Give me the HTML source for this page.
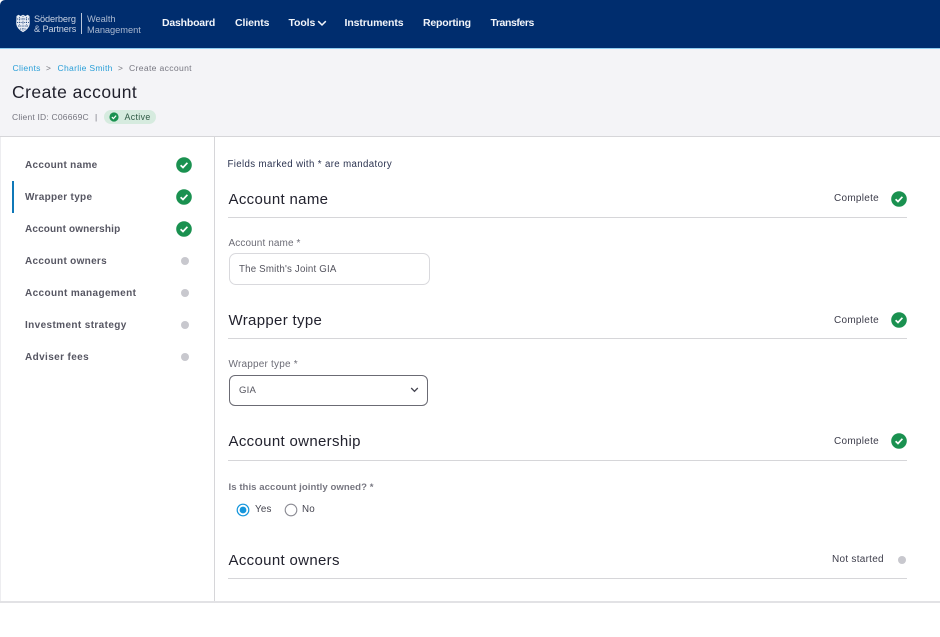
<!DOCTYPE html>
<html><head><meta charset="utf-8"><style>
html,body{margin:0;padding:0;background:#fff}
#p{position:relative;width:940px;height:637px;overflow:hidden;background:#fff;font-family:"Liberation Sans",sans-serif;color:#33333f;filter:blur(.3px)}
#p div{position:absolute;white-space:nowrap}
.t{line-height:14px}
.nav{top:16px;color:#f2f5fa;font-size:10.5px;font-weight:bold}
.side{left:25px;font-size:10px;font-weight:bold;letter-spacing:.38px;color:#565662}
.h{left:228.5px;font-size:15px;letter-spacing:.33px;color:#22222e;line-height:18px}
.hr{left:228px;width:679px;height:1px;background:#d6d6d9}
.lab{left:228.5px;font-size:10px;letter-spacing:.2px;color:#6c6c76}
.st{font-size:10px;letter-spacing:.27px;color:#3c3c4a}
.dot{width:8px;height:8px;border-radius:50%;background:#c8c8ce}
svg{position:absolute;display:block}
</style></head><body><div id="p">
<div style="left:0;top:0;width:940px;height:48px;background:#002d6e;border-radius:5px 0 0 0"></div>
<div style="left:0;top:48px;width:940px;height:1px;background:#8fcdf0"></div>
<div style="left:0;top:49px;width:940px;height:87px;background:#f4f4f7"></div>
<div style="left:0;top:136px;width:940px;height:1px;background:#d6d6d9"></div>
<div style="left:214px;top:137px;width:1px;height:464px;background:#d6d6d9"></div>
<div style="left:0;top:137px;width:1px;height:464px;background:#ededf0"></div>
<div style="left:0;top:601px;width:940px;height:2px;background:#e2e2e5"></div>

<svg style="left:16px;top:14px" width="14" height="19" viewBox="0 0 14 19"><path d="M.5 2 L2.5 .8 L4.5 2 L7 .8 L9.5 2 L11.5 .8 L13.5 2 L13.8 10 Q13 15 7 18.2 Q1 15 .2 10Z" fill="#e6ebf3"/><path d="M1 5H13M1 8.5H13M2 12H12M4 15H10" stroke="#002d6e" stroke-width=".7" stroke-dasharray="1.2 1" fill="none"/><path d="M7 2V17M3.5 3V13M10.5 3V13" stroke="#002d6e" stroke-width=".6" stroke-dasharray="1 1.4" fill="none"/></svg>
<div class="t" style="left:34px;top:14px;font-size:9.2px;color:#c9d3e3;letter-spacing:-.12px;line-height:10px">Söderberg<br>&amp; Partners</div>
<div style="left:81px;top:13px;width:1px;height:21px;background:#b9c6da"></div>
<div class="t" style="left:87px;top:14px;font-size:9.3px;color:#a9b8d0;letter-spacing:-.05px;line-height:10.5px">Wealth<br>Management</div>
<div class="t nav" style="left:162px;letter-spacing:-.2px">Dashboard</div>
<div class="t nav" style="left:235px;letter-spacing:-.08px">Clients</div>
<div class="t nav" style="left:288.5px;letter-spacing:-.1px">Tools</div>
<svg style="left:317px;top:20px" width="10" height="7" viewBox="0 0 10 7"><path d="M1.2 1.2 L5 5 L8.8 1.2" fill="none" stroke="#f2f5fa" stroke-width="1.5"/></svg>
<div class="t nav" style="left:344.5px;letter-spacing:-.1px">Instruments</div>
<div class="t nav" style="left:423px;letter-spacing:-.2px">Reporting</div>
<div class="t nav" style="left:490.5px;letter-spacing:-.43px">Transfers</div>

<div class="t" style="left:12.5px;top:61px;font-size:8.6px;letter-spacing:.28px;color:#2a9fd8">Clients</div>
<div class="t" style="left:46px;top:61px;font-size:8.4px;color:#77777f">&gt;</div>
<div class="t" style="left:57.5px;top:61px;font-size:8.6px;letter-spacing:.28px;color:#2a9fd8">Charlie Smith</div>
<div class="t" style="left:118px;top:61px;font-size:8.4px;color:#77777f">&gt;</div>
<div class="t" style="left:129px;top:61px;font-size:8.6px;letter-spacing:.33px;color:#777781">Create account</div>
<div style="left:12px;top:82px;font-size:17.5px;letter-spacing:.47px;line-height:21px;color:#1f1f2b">Create account</div>
<div class="t" style="left:12px;top:110px;font-size:8.5px;letter-spacing:.2px;color:#75757f">Client ID: C06669C</div>
<div class="t" style="left:95px;top:110px;font-size:8.5px;color:#75757f">|</div>
<div style="left:104px;top:110px;width:52px;height:14px;border-radius:7px;background:#d6ebdf"></div>
<svg style="left:109px;top:112px" width="10" height="10" viewBox="0 0 10 10"><circle cx="5" cy="5" r="4.6" fill="#1a9150"/><path d="M2.9 5.1 L4.4 6.6 L7.1 3.6" fill="none" stroke="#fff" stroke-width="1.2"/></svg>
<div class="t" style="left:124.5px;top:110px;font-size:8.8px;letter-spacing:.35px;color:#2f5a45">Active</div>

<div class="t side" style="top:159px;letter-spacing:.3px">Account name</div>
<div class="t side" style="top:191px;letter-spacing:.3px">Wrapper type</div>
<div class="t side" style="top:223px;letter-spacing:.15px">Account ownership</div>
<div class="t side" style="top:255px;letter-spacing:.3px">Account owners</div>
<div class="t side" style="top:287px">Account management</div>
<div class="t side" style="top:319px">Investment strategy</div>
<div class="t side" style="top:351px">Adviser fees</div>
<div style="left:12px;top:181px;width:2px;height:32px;background:#0f78b8"></div>
<svg style="left:176px;top:157px" width="16" height="16" viewBox="0 0 16 16"><circle cx="8" cy="8" r="7.8" fill="#1a9150"/><path d="M4.6 8.2 L7 10.5 L11.4 5.8" fill="none" stroke="#fff" stroke-width="1.7"/></svg>
<svg style="left:176px;top:189px" width="16" height="16" viewBox="0 0 16 16"><circle cx="8" cy="8" r="7.8" fill="#1a9150"/><path d="M4.6 8.2 L7 10.5 L11.4 5.8" fill="none" stroke="#fff" stroke-width="1.7"/></svg>
<svg style="left:176px;top:221px" width="16" height="16" viewBox="0 0 16 16"><circle cx="8" cy="8" r="7.8" fill="#1a9150"/><path d="M4.6 8.2 L7 10.5 L11.4 5.8" fill="none" stroke="#fff" stroke-width="1.7"/></svg>
<div class="dot" style="left:181px;top:257px"></div>
<div class="dot" style="left:181px;top:289px"></div>
<div class="dot" style="left:181px;top:321px"></div>
<div class="dot" style="left:181px;top:353px"></div>

<div class="t" style="left:227.5px;top:158px;font-size:9.7px;letter-spacing:.36px;color:#2b3350">Fields marked with * are mandatory</div>

<div class="h" style="top:191px">Account name</div>
<div class="t st" style="left:834px;top:192px">Complete</div>
<svg style="left:891px;top:191px" width="16" height="16" viewBox="0 0 16 16"><circle cx="8" cy="8" r="7.8" fill="#1a9150"/><path d="M4.6 8.2 L7 10.5 L11.4 5.8" fill="none" stroke="#fff" stroke-width="1.7"/></svg>
<div class="hr" style="top:217px"></div>
<div class="t lab" style="top:237px;letter-spacing:.1px">Account name *</div>
<div style="left:229px;top:253px;width:199px;height:30px;border:1px solid #d9d9dd;border-radius:7px;background:#fff"></div>
<div class="t" style="left:239px;top:263px;font-size:9.7px;letter-spacing:.2px;color:#55555f">The Smith's Joint GIA</div>

<div class="h" style="top:312px">Wrapper type</div>
<div class="t st" style="left:834px;top:314px">Complete</div>
<svg style="left:891px;top:312px" width="16" height="16" viewBox="0 0 16 16"><circle cx="8" cy="8" r="7.8" fill="#1a9150"/><path d="M4.6 8.2 L7 10.5 L11.4 5.8" fill="none" stroke="#fff" stroke-width="1.7"/></svg>
<div class="hr" style="top:338px"></div>
<div class="t lab" style="top:358px">Wrapper type *</div>
<div style="left:228.5px;top:375px;width:197.5px;height:28.5px;border:1.6px solid #6b6b74;border-radius:6px;background:#fff"></div>
<div class="t" style="left:239px;top:384px;font-size:9.6px;letter-spacing:.2px;color:#55555f">GIA</div>
<svg style="left:410px;top:387px" width="9" height="6" viewBox="0 0 9 6"><path d="M1.2 1 L4.5 4.3 L7.8 1" fill="none" stroke="#444450" stroke-width="1.3"/></svg>

<div class="h" style="top:433px">Account ownership</div>
<div class="t st" style="left:834px;top:435px">Complete</div>
<svg style="left:891px;top:433px" width="16" height="16" viewBox="0 0 16 16"><circle cx="8" cy="8" r="7.8" fill="#1a9150"/><path d="M4.6 8.2 L7 10.5 L11.4 5.8" fill="none" stroke="#fff" stroke-width="1.7"/></svg>
<div class="hr" style="top:460px"></div>
<div class="t lab" style="top:481px;font-weight:bold;font-size:9.6px;letter-spacing:.05px;color:#777781">Is this account jointly owned? *</div>
<svg style="left:236px;top:503px" width="14" height="14" viewBox="0 0 14 14"><circle cx="7" cy="7" r="5.8" fill="#fff" stroke="#1596dc" stroke-width="1.2"/><circle cx="7" cy="7" r="3.4" fill="#1596dc"/></svg>
<div class="t" style="left:255px;top:503px;font-size:9.8px;letter-spacing:.2px;color:#44444f">Yes</div>
<svg style="left:284px;top:503px" width="14" height="14" viewBox="0 0 14 14"><circle cx="7" cy="7" r="5.8" fill="#fff" stroke="#8c8c94" stroke-width="1.1"/></svg>
<div class="t" style="left:302px;top:503px;font-size:9.8px;letter-spacing:.2px;color:#44444f">No</div>

<div class="h" style="top:552px">Account owners</div>
<div class="t st" style="left:832px;top:553px">Not started</div>
<div class="dot" style="left:898px;top:556px"></div>
<div class="hr" style="top:578px"></div>
</div></body></html>
